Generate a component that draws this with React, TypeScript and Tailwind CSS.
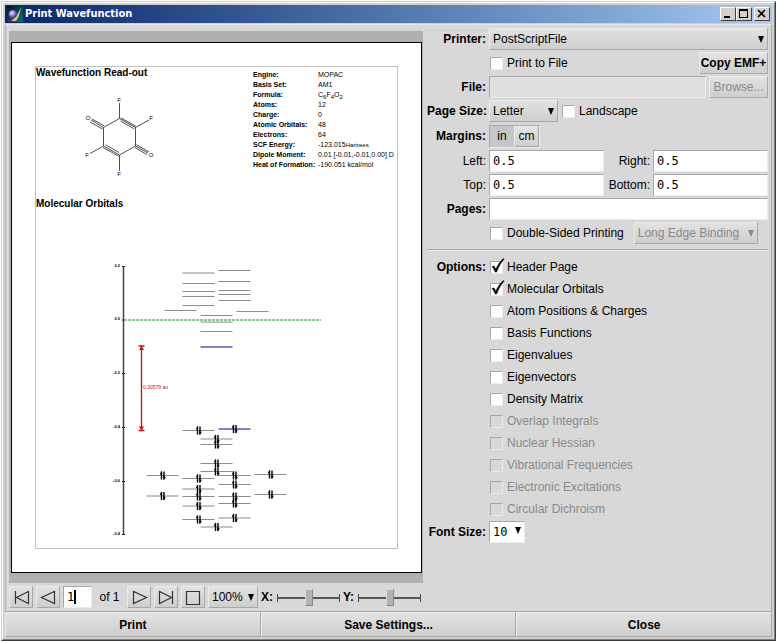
import type { ReactNode } from "react";

const bevel =
  "border border-t-[#ececec] border-l-[#ececec] border-r-[#a8a8a8] border-b-[#a8a8a8] bg-linear-to-b from-[#e2e2e2] to-[#cecece]";
const sunken =
  "border border-t-[#a8a8a8] border-l-[#a8a8a8] border-r-[#ececec] border-b-[#ececec]";
const field = `${sunken} bg-white h-[22px] px-[3px] font-['DejaVu_Sans_Mono',monospace] text-[12px] outline-none min-w-0`;

function Arrow({ className }: { className: string }) {
  return (
    <svg viewBox="0 0 6 7" className={`pointer-events-none absolute h-[7px] w-[6px] ${className}`}>
      <path d="M0 0h6L3 7z" fill="currentColor" />
    </svg>
  );
}

function Row({ label, htmlFor, children, tall }: { label?: string; htmlFor?: string; children: ReactNode; tall?: boolean }) {
  return (
    <div className={`flex items-center gap-[3px] ${tall ? "h-[26px]" : "h-6"}`}>
      <label htmlFor={htmlFor} className="w-[59px] shrink-0 text-right font-bold whitespace-nowrap">
        {label}
      </label>
      {children}
    </div>
  );
}

function Check({ label, checked, disabled }: { label: string; checked?: boolean; disabled?: boolean }) {
  return (
    <label className={`flex items-center gap-1 whitespace-nowrap ${disabled ? "text-[#8a8a8a]" : ""}`}>
      <span className="relative ml-px h-[13px] w-[13px] shrink-0">
        <input
          type="checkbox"
          defaultChecked={checked}
          disabled={disabled}
          className={`peer block h-[13px] w-[13px] appearance-none ${sunken} ${disabled ? "bg-[#d8d8d8]" : "bg-white"}`}
        />
        <svg viewBox="0 0 14 15" className="pointer-events-none absolute bottom-px left-px hidden h-[15px] w-[14px] peer-checked:block">
          <path d="M1 8.500L3 8l1.800 3.200C7 6.500 9.500 3 12.500 .5l.5.6C10 4.500 7.500 9 5.600 14H4.200C3.300 11.500 2.300 9.700 1 8.500z" fill="#000" stroke="#000" strokeWidth=".6" />
        </svg>
      </span>
      {label}
    </label>
  );
}

function Axis({ label }: { label: string }) {
  return (
    <label className="flex shrink-0 items-center gap-[4px] font-bold">
      {label}
      <span className="relative flex h-5 w-[63px] items-center">
        <span className="absolute inset-x-0 top-[7px] h-[8px] border-x border-[#444]" />
        <span className="absolute inset-x-0 top-[10px] h-[2px] bg-[#555]" />
        <input
          type="range"
          defaultValue={50}
          className="relative h-[18px] w-full appearance-none bg-transparent [&::-webkit-slider-thumb]:h-[17px] [&::-webkit-slider-thumb]:w-[8px] [&::-webkit-slider-thumb]:appearance-none [&::-webkit-slider-thumb]:border [&::-webkit-slider-thumb]:border-t-[#d8d8d8] [&::-webkit-slider-thumb]:border-l-[#d8d8d8] [&::-webkit-slider-thumb]:border-r-[#888] [&::-webkit-slider-thumb]:border-b-[#888] [&::-webkit-slider-thumb]:bg-[#b2b2b2]"
        />
      </span>
    </label>
  );
}

function Tool({ name, d }: { name: string; d: string }) {
  return (
    <button aria-label={name} className={`flex h-[22px] w-6 shrink-0 items-center justify-center ${bevel}`}>
      <svg viewBox="0 0 18 18" className="h-[18px] w-[18px] shrink-0">
        <path d={d} fill="none" stroke="#333" strokeWidth="1.200" />
      </svg>
    </button>
  );
}

const facts: [string, ReactNode][] = [
  ["Engine:", "MOPAC"],
  ["Basis Set:", "AM1"],
  ["Formula:", <>C<sub className="text-[6px]">6</sub>F<sub className="text-[6px]">4</sub>O<sub className="text-[6px]">2</sub></>],
  ["Atoms:", "12"],
  ["Charge:", "0"],
  ["Atomic Orbitals:", "48"],
  ["Electrons:", "64"],
  ["SCF Energy:", <>-123.015<span className="text-[6px]">Hartrees</span></>],
  ["Dipole Moment:", "0.01 [-0.01,-0.01,0.00] D"],
  ["Heat of Formation:", "-190.051 kcal/mol"],
];

function Molecule() {
  const bonds = [
    "M119.500 118.500L135.500 127.500V146L119.500 155L103.500 146V127.500Z",
    "M119.500 118.500V103M135.500 127.500L149 120M119.500 155V171M103.500 146L90 153.500",
    "M120.500 121L134 128.700M119 152.500L105.500 144.700M118.500 156L103 147.500M121 118L136 126.300",
    "M103.500 127.500L91 120M102.500 129L90 122M104 125.800L92 119M135.500 146L148 153M134.800 147.500L147 154.500M136.500 144.800L149 151.800",
  ];
  const atoms: [string, number, number][] = [
    ["F", 119, 102], ["F", 151, 120], ["O", 88, 120], ["F", 87, 157], ["O", 151, 157], ["F", 119, 176],
  ];
  return (
    <svg viewBox="80 92 80 90" className="mt-[13px] ml-11 h-[90px] w-20" fontFamily="Liberation Sans, sans-serif">
      {bonds.map((d) => (
        <path key={d} d={d} fill="none" stroke="#222" strokeWidth=".8" />
      ))}
      {atoms.map(([t, x, y]) => (
        <text key={`${x}-${y}`} x={x} y={y} fontSize="6" textAnchor="middle">{t}</text>
      ))}
    </svg>
  );
}

const empty: [number, number[]][] = [
  [183, [273, 283.5, 291.5, 296.5, 305.5]],
  [219, [270.5, 281.5, 290.5, 294.5, 300.5]],
  [165, [310.5]],
  [237, [311.5]],
  [201, [315.5, 322, 331.5]],
];
const filled: [number, number[]][] = [
  [183, [430.5, 478.5, 489, 496.5, 506, 519.5]],
  [219, [475.5, 484.5, 496.5, 503.5, 518]],
  [201, [439, 444.5, 463.5, 471.5, 527]],
  [147, [475.5, 496]],
  [255, [474.5, 494.5]],
];
const ticks: [string, number][] = [
  ["0.2", 266.5], ["0.0", 320], ["-0.2", 373.5], ["-0.4", 427.5], ["-0.6", 481.5], ["-0.8", 534.5],
];

function Pair({ x, y }: { x: number; y: number }) {
  return (
    <g>
      <path d={`M${x - 1} ${y + 4}v-8M${x + 1.5} ${y - 4}v8`} stroke="#000" strokeWidth="1.400" />
      <path d={`M${x - 0.5} ${y - 4.5}v4l-2.300-1zM${x + 1} ${y + 4.5}v-4l2.300 1z`} fill="#000" />
    </g>
  );
}

function OrbitalChart() {
  return (
    <svg viewBox="36 260 361 280" className="block w-full" fontFamily="Liberation Sans, sans-serif">
      <path d="M123.500 266V535" stroke="#444" strokeWidth="1.500" />
      {ticks.map(([t, y]) => (
        <g key={t}>
          <path d={`M122 ${y}h3`} stroke="#222" />
          <text x="120" y={y} fontSize="4" fontWeight="bold" textAnchor="end">{t}</text>
        </g>
      ))}
      <path d="M124 320H321" stroke="#6ab46a" strokeWidth="1.500" strokeDasharray="3 1" />
      {[...empty, ...filled].map(([x, ys]) =>
        ys.map((y) => <path key={`${x}-${y}`} d={`M${x - 0.5} ${y}h32`} stroke="#8c8c8c" />)
      )}
      <path d="M200.500 347h32M218.500 429h32" stroke="#5858bc" strokeWidth="1.700" />
      {filled.map(([x, ys]) => ys.map((y) => <Pair key={`${x}-${y}`} x={x + 15.500} y={y} />))}
      <Pair x={234.5} y={429} />
      <path d="M141.500 346V430M138.500 346h6M138.500 430.500h6" fill="none" stroke="#c41414" strokeWidth="1.300" />
      <path d="M141.500 346l2.500 4h-5zM141.500 430.500l2.500-4h-5z" fill="#c41414" />
      <text x="143" y="389" fontSize="5" fill="#c41414">0.30579 au</text>
    </svg>
  );
}

const options: [string, boolean, boolean][] = [
  ["Header Page", true, false],
  ["Molecular Orbitals", true, false],
  ["Atom Positions & Charges", false, false],
  ["Basis Functions", false, false],
  ["Eigenvalues", false, false],
  ["Eigenvectors", false, false],
  ["Density Matrix", false, false],
  ["Overlap Integrals", false, true],
  ["Nuclear Hessian", false, true],
  ["Vibrational Frequencies", false, true],
  ["Electronic Excitations", false, true],
  ["Circular Dichroism", false, true],
];

const frameButton =
  "flex h-[14px] w-4 items-center justify-center border border-t-white border-l-white border-r-[#404040] border-b-[#404040] bg-[#d4d0c8]";

function TitleBar() {
  return (
    <header className="flex h-[18px] items-center bg-linear-to-r from-[#0a246a] to-[#a6caf0] pr-[2px] pl-[2px]">
      <svg viewBox="0 0 16 16" className="h-4 w-4 shrink-0">
        <defs>
          <linearGradient id="tile" x2="1" y2="1"><stop stopColor="#001428" /><stop offset="1" stopColor="#087878" /></linearGradient>
          <radialGradient id="ball" cx=".4" cy=".35"><stop stopColor="#eee8ff" /><stop offset=".5" stopColor="#9a88dc" /><stop offset="1" stopColor="#4a389a" /></radialGradient>
        </defs>
        <path d="M0 0h16v16H0z" fill="url(#tile)" />
        <circle cx="6" cy="8.500" r="4.500" fill="url(#ball)" />
        <path d="M14.500 1L9 11l-5 4h5l2.500-4z" fill="#e8c468" />
      </svg>
      <h1 className="ml-[2px] flex-1 font-['DejaVu_Sans_Condensed','DejaVu_Sans',sans-serif] text-[11px] font-bold text-white">
        Print Wavefunction
      </h1>
      <button aria-label="Minimize" className={frameButton}>
        <svg viewBox="0 0 12 10" className="h-[10px] w-3 shrink-0"><path d="M2 7h6v2H2z" /></svg>
      </button>
      <button aria-label="Maximize" className={frameButton}>
        <svg viewBox="0 0 12 10" className="h-[10px] w-3 shrink-0"><path d="M1 0h9v9H1zM2 2v6h7V2z" fillRule="evenodd" /></svg>
      </button>
      <button aria-label="Close window" className={`ml-[2px] ${frameButton}`}>
        <svg viewBox="0 0 12 10" className="h-[10px] w-3 shrink-0"><path d="M2 1l7 7M9 1L2 8" stroke="#000" strokeWidth="1.600" /></svg>
      </button>
    </header>
  );
}

function Preview() {
  return (
    <section className="w-[414px] shrink-0 pt-[6px]">
      <div className="bg-[#b0b0b0] pt-[11px] pr-px pb-[10px] pl-[2px]">
        <article className="aspect-[411/531] w-full border border-black bg-white p-[23px]">
          <div className="h-full border border-[#c0c0c0]">
            <div className="flex">
              <div className="w-[217px] shrink-0">
                <h2 className="text-[10px] leading-3 font-bold">Wavefunction Read-out</h2>
                <Molecule />
              </div>
              <table className="mt-[3px] h-[100px] text-[7px] leading-[10px] whitespace-nowrap">
                <tbody>
                  {facts.map(([k, v]) => (
                    <tr key={k} className="h-[10px]">
                      <th scope="row" className="w-[65px] p-0 text-left">{k}</th>
                      <td className="p-0">{v}</td>
                    </tr>
                  ))}
                </tbody>
              </table>
            </div>
            <h2 className="mt-4 text-[10px] leading-3 font-bold">Molecular Orbitals</h2>
            <div className="pt-[50px]">
              <OrbitalChart />
            </div>
          </div>
        </article>
      </div>
      <div className="flex items-center gap-[3px] py-[3px]">
        <Tool name="First page" d="M3.500 3V16M16.500 3.500V15.500L4.500 9.500z" />
        <Tool name="Previous page" d="M15.500 3.500V15.500L2.500 9.500z" />
        <span className="relative">
          <input aria-label="Page" defaultValue="1" className={`${field} block w-[29px]`} />
          <span className="absolute top-1 left-[11px] h-[14px] w-[2px] bg-black" />
        </span>
        <span className="w-[29px] shrink-0 text-center whitespace-nowrap">of 1</span>
        <Tool name="Next page" d="M3.500 3.500V15.500L16.500 9.500z" />
        <Tool name="Last page" d="M15.500 3V16M2.500 3.500V15.500L14.500 9.500z" />
        <Tool name="Fit page" d="M2.500 3.500h13v13h-13z" />
        <span className="relative">
          <select aria-label="Zoom" className={`block h-[22px] w-[50px] appearance-none pl-[3px] ${bevel}`}>
            <option>100%</option>
          </select>
          <Arrow className="top-2 right-1" />
        </span>
        <Axis label="X:" />
        <Axis label="Y:" />
      </div>
    </section>
  );
}

function Settings() {
  return (
    <form className="ml-1 min-w-0 flex-1 pt-[2px] pr-[3px]" onSubmit={(e) => e.preventDefault()}>
      <Row label="Printer:" htmlFor="printer">
        <span className="relative flex-1">
          <select id="printer" className={`block h-[22px] w-full appearance-none pl-[3px] ${bevel}`}>
            <option>PostScriptFile</option>
          </select>
          <Arrow className="top-2 right-1" />
        </span>
      </Row>
      <Row>
        <Check label="Print to File" />
        <button className={`ml-auto h-[22px] w-[69px] font-bold whitespace-nowrap ${bevel}`}>Copy EMF+</button>
      </Row>
      <Row label="File:" htmlFor="file">
        <input id="file" disabled className={`h-[22px] min-w-0 flex-1 bg-[#dfdfdf] px-[3px] ${sunken}`} />
        <button disabled className={`h-[22px] w-[59px] text-[#8a8a8a] ${bevel}`}>Browse...</button>
      </Row>
      <Row label="Page Size:" htmlFor="size">
        <span className="relative">
          <select id="size" className={`block h-[22px] w-[69px] appearance-none pl-[3px] ${bevel}`}>
            <option>Letter</option>
          </select>
          <Arrow className="top-2 right-1" />
        </span>
        <Check label="Landscape" />
      </Row>
      <Row label="Margins:" tall>
        <div className={`flex h-[23px] ${sunken}`}>
          <button aria-pressed="true" className="w-6 bg-[#c6c6c6]">in</button>
          <button aria-pressed="false" className={`w-[25px] ${bevel}`}>cm</button>
        </div>
      </Row>
      {[["Left:", "Right:"], ["Top:", "Bottom:"]].map(([a, b]) => (
        <div key={a} className="flex h-6 items-center gap-[3px]">
          <label htmlFor={a} className="w-[59px] shrink-0 text-right">{a}</label>
          <input id={a} defaultValue="0.5" className={`${field} flex-1`} />
          <label htmlFor={b} className="w-[43px] shrink-0 text-right">{b}</label>
          <input id={b} defaultValue="0.5" className={`${field} flex-1`} />
        </div>
      ))}
      <Row label="Pages:" htmlFor="pages">
        <input id="pages" className={`${field} flex-1`} />
      </Row>
      <Row>
        <Check label="Double-Sided Printing" />
        <span className="relative ml-[7px]">
          <select aria-label="Binding" disabled className={`block h-[22px] w-[124px] appearance-none pl-[3px] text-[#8a8a8a] opacity-100 ${bevel}`}>
            <option>Long Edge Binding</option>
          </select>
          <Arrow className="top-2 right-1 text-[#8a8a8a]" />
        </span>
      </Row>
      <hr className="mt-1 mb-[5px] h-[2px] border-t border-b border-t-[#a8a8a8] border-b-[#ececec]" />
      <fieldset className="flex gap-[3px]">
        <div className="h-[22px] w-[59px] text-right leading-[22px] font-bold">Options:</div>
        <div>
          {options.map(([label, on, off]) => (
            <div key={label} className="flex h-[22px] items-center">
              <Check label={label} checked={on} disabled={off} />
            </div>
          ))}
        </div>
      </fieldset>
      <Row label="Font Size:" htmlFor="font">
        <span className="relative">
          <select id="font" className={`${field} block w-9 appearance-none`}>
            <option>10</option>
          </select>
          <Arrow className="top-[6px] right-1" />
        </span>
      </Row>
    </form>
  );
}

export default function App() {
  return (
    <div className="flex min-h-screen flex-col bg-white p-px font-['Liberation_Sans',Arial,sans-serif] text-[12px] leading-4 text-black">
      <div className="flex flex-1 flex-col border border-t-[#d4d0c8] border-r-[#404040] border-b-[#404040] border-l-[#d4d0c8]">
        <div className="flex flex-1 flex-col border border-t-white border-r-[#808080] border-b-[#808080] border-l-white bg-[#d4d0c8] p-[2px]">
          <TitleBar />
          <div className="mt-px flex flex-1 flex-col bg-[#d8d8d8]">
            <main className="flex flex-1 border border-t-[#e8e8e8] border-r-[#a8a8a8] border-b-[#a8a8a8] border-l-[#b8b8b8] pl-[3px]">
              <Preview />
              <Settings />
            </main>
            <footer className="grid grid-cols-3">
              {["Print", "Save Settings...", "Close"].map((t) => (
                <button key={t} className={`h-[25px] font-bold ${bevel}`}>{t}</button>
              ))}
            </footer>
          </div>
        </div>
      </div>
    </div>
  );
}
